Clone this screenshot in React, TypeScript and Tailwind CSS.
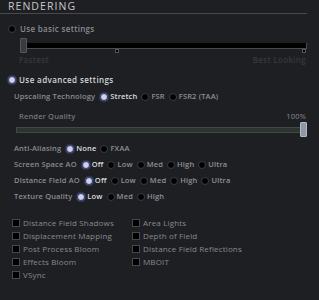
import React from 'react';

const font = { fontFamily: '"Open Sans", "Noto Sans", sans-serif' };

function Dot({ on }: { on?: boolean }) {
  return (
    <span
      className={
        on
          ? 'w-[8px] h-[8px] rounded-full bg-[#cdd2ea] border border-[#2e3266] shadow-[0_0_2px_#6d74b8] shrink-0'
          : 'w-[8px] h-[8px] rounded-full bg-black border border-[#3c3d42] shrink-0'
      }
    />
  );
}

function OptionRow({ label, options, selected }: { label: string; options: string[]; selected: number }) {
  return (
    <div className="flex items-center h-[16px] pl-[14px]">
      <span className="text-[#8a8b8f] mr-[5px]">{label}</span>
      {options.map((o, i) => (
        <div key={o} className="flex items-center gap-[2px] mr-[4px]">
          <Dot on={i === selected} />
          <span className={i === selected ? 'text-[#dcdcde]' : 'text-[#8e8f93]'}>{o}</span>
        </div>
      ))}
    </div>
  );
}

function Check({ label }: { label: string }) {
  return (
    <div className="flex items-center gap-[3px] h-[13px]">
      <span className="w-[8px] h-[8px] bg-black border border-[#47484d] shrink-0" />
      <span className="text-[#88898d] text-[8px] font-normal tracking-[0.02em]">{label}</span>
    </div>
  );
}

export default function App() {
  return (
    <div className="w-[319px] h-[300px] bg-[#1e1f23] overflow-hidden text-[7.5px] font-semibold tracking-[0.02em]" style={font}>
      <div className="h-[13px] pl-[8px] flex items-center text-[10.5px] font-normal tracking-[0.1em] text-[#c8c8ca]">
        RENDERING
      </div>
      <div className="h-px w-[307px] bg-[#48494d]" />

      <div className="mt-[10px] h-[10px] pl-[8px] flex items-center gap-[4px] text-[8px] tracking-[0.04em]">
        <Dot />
        <span className="text-[#8a8b8f]">Use basic settings</span>
      </div>

      <div className="relative mt-[4px] ml-[20px] w-[287px] h-[15px] flex items-center">
        <div className="ml-[6px] flex-1 h-[6px] bg-black border-b border-r border-[#4a4b50]" />
        <span className="absolute left-0 top-0 w-[7px] h-[15px] bg-[#3a3b3f] border border-[#56575b] rounded-[1px]" />
        <span className="absolute left-[95px] top-[11px] w-[4px] h-[4px] bg-black border border-[#55565a]" />
        <span className="absolute right-[1px] top-[11px] w-[4px] h-[4px] bg-black border border-[#55565a]" />
      </div>
      <div className="mt-[2px] h-[10px] ml-[19px] w-[287px] flex items-center justify-between text-[8px] tracking-[0.04em] text-[#37383d]">
        <span>Fastest</span>
        <span>Best Looking</span>
      </div>

      <div className="mt-[10px] h-[10px] pl-[8px] flex items-center gap-[3px] text-[8px] tracking-[0.05em]">
        <Dot on />
        <span className="text-[#d4d4d6]">Use advanced settings</span>
      </div>

      <div className="mt-[4px]">
        <OptionRow label="Upscaling Technology" options={['Stretch', 'FSR', 'FSR2 (TAA)']} selected={0} />
      </div>

      <div className="mt-[7px] h-[10px] ml-[19px] w-[287px] flex items-center justify-between text-[#75767a]">
        <span>Render Quality</span>
        <span className="text-[#8a8b8f] font-normal">100%</span>
      </div>
      <div className="relative ml-[16px] w-[291px] h-[15px] flex items-center">
        <div className="flex-1 mr-[5px] h-[6px] bg-[#2b3431] border border-[#414a46]" />
        <span className="absolute right-0 top-0 w-[7px] h-[15px] bg-[#8d98a4] border border-[#b0b9c3] rounded-[1px]" />
      </div>

      <div className="mt-[4px]">
        <OptionRow label="Anti-Aliasing" options={['None', 'FXAA']} selected={0} />
        <OptionRow label="Screen Space AO" options={['Off', 'Low', 'Med', 'High', 'Ultra']} selected={0} />
        <OptionRow label="Distance Field AO" options={['Off', 'Low', 'Med', 'High', 'Ultra']} selected={0} />
        <OptionRow label="Texture Quality" options={['Low', 'Med', 'High']} selected={0} />
      </div>

      <div className="mt-[11px] grid grid-cols-[120px_1fr] pl-[12px]">
        <Check label="Distance Field Shadows" />
        <Check label="Area Lights" />
        <Check label="Displacement Mapping" />
        <Check label="Depth of Field" />
        <Check label="Post Process Bloom" />
        <Check label="Distance Field Reflections" />
        <Check label="Effects Bloom" />
        <Check label="MBOIT" />
        <Check label="VSync" />
      </div>
    </div>
  );
}
